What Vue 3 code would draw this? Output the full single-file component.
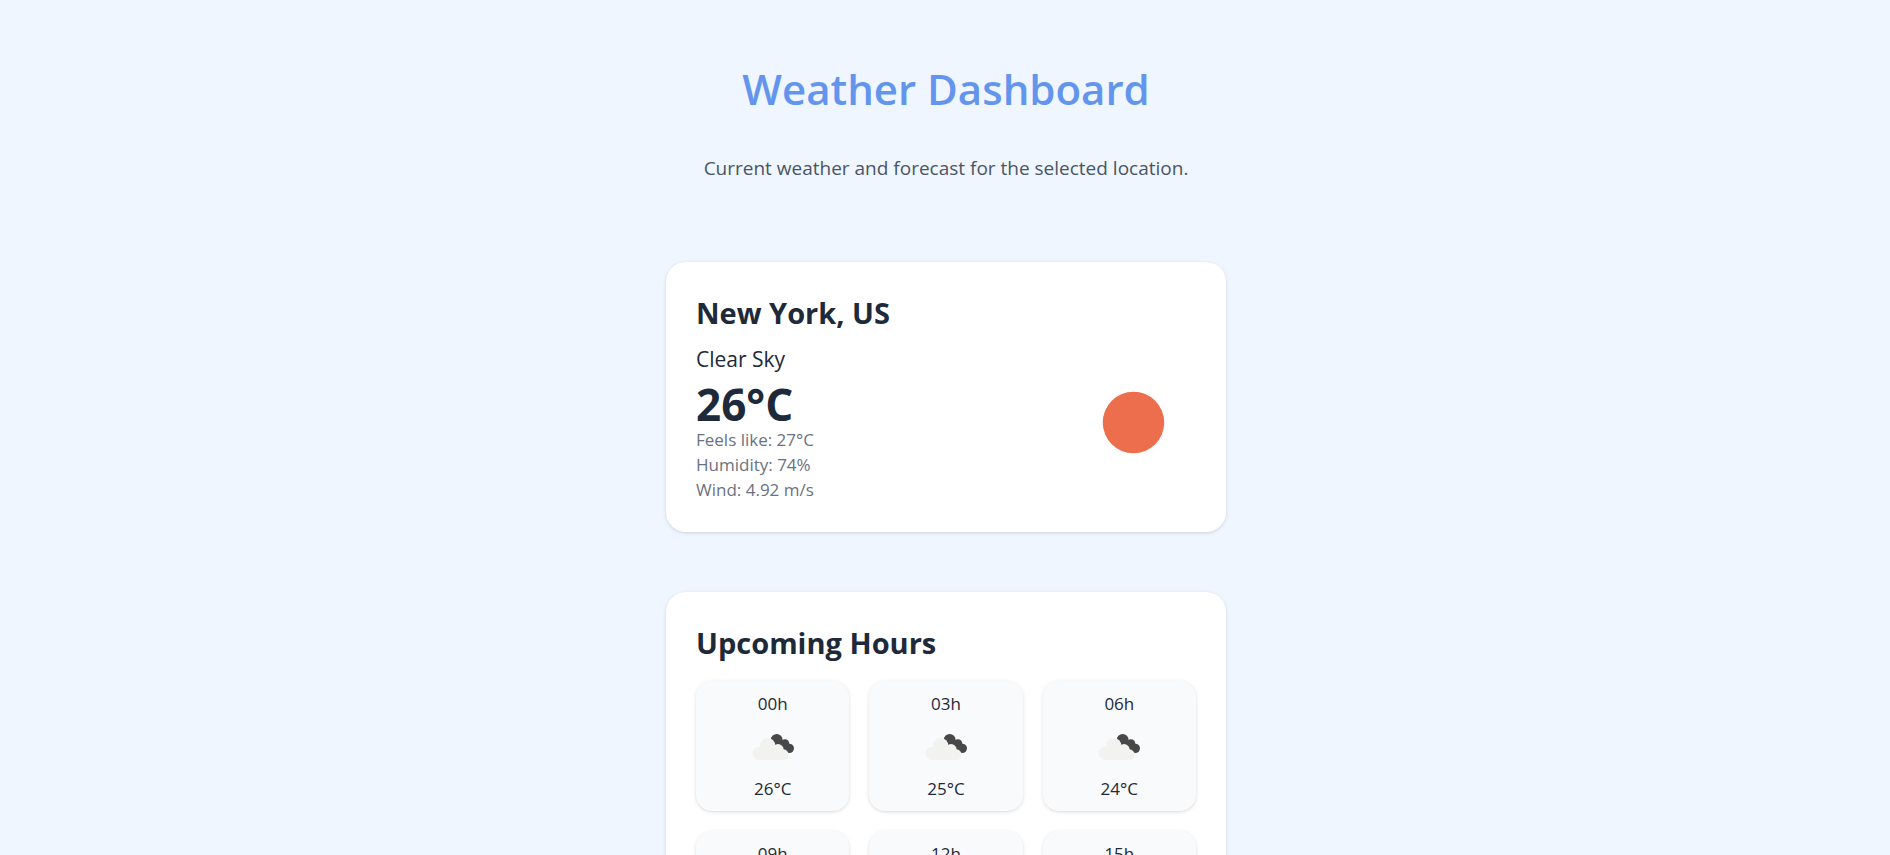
<script setup>
const details = ['Feels like: 27°C', 'Humidity: 74%', 'Wind: 4.92 m/s']

const hours = [
  { time: '00h', temp: '26°C' },
  { time: '03h', temp: '25°C' },
  { time: '06h', temp: '24°C' },
  { time: '09h', temp: '24°C' },
  { time: '12h', temp: '25°C' },
  { time: '15h', temp: '26°C' },
]
</script>

<template>
  <main class="page">
    <header class="intro">
      <h1 class="title">Weather Dashboard</h1>
      <p class="subtitle">Current weather and forecast for the selected location.</p>
    </header>

    <section class="card">
      <h2 class="heading">New York, US</h2>
      <div class="current">
        <div>
          <p class="condition">Clear Sky</p>
          <p class="temperature">26°C</p>
          <p v-for="line in details" :key="line" class="detail">{{ line }}</p>
        </div>
        <svg class="sun" viewBox="0 0 100 100" role="img" aria-label="Clear sky">
          <circle cx="50" cy="50" r="24.6" fill="#ec6e4c" />
        </svg>
      </div>
    </section>

    <section class="card">
      <h2 class="heading">Upcoming Hours</h2>
      <ul class="hours">
        <li v-for="hour in hours" :key="hour.time" class="hour">
          <span>{{ hour.time }}</span>
          <svg class="cloud" viewBox="6 -12 180 180" role="img" aria-label="Broken clouds">
            <g fill="#484848">
              <circle cx="107" cy="60" r="18" />
              <circle cx="132" cy="71" r="13" />
              <circle cx="145" cy="85" r="14" />
              <path d="M107 59 132 62 145 86 136 97 108 78Z" />
            </g>
            <g fill="#f2f2f0">
              <circle cx="80" cy="77" r="23" />
              <circle cx="111" cy="89" r="17" />
              <circle cx="55" cy="100" r="20" />
              <circle cx="127" cy="104" r="16" />
              <path d="M55 90H128V120H55Z" />
            </g>
          </svg>
          <span>{{ hour.temp }}</span>
        </li>
      </ul>
    </section>
  </main>
</template>

<style>
body {
  margin: 0;
  background: #eff6ff;
}
</style>

<style scoped>
.page {
  display: flex;
  flex-direction: column;
  align-items: center;
  gap: 60px;
  padding: 62px 20px 60px 22px;
  font-family: "Open Sans", "Noto Sans", sans-serif;
  color: #1e2939;
}

h1,
h2,
p,
ul {
  margin: 0;
  padding: 0;
}

.intro {
  display: flex;
  flex-direction: column;
  gap: 38px;
  padding-bottom: 20px;
  text-align: center;
}

.title {
  font-size: 42px;
  line-height: 54px;
  font-weight: 600;
  color: #6495ed;
}

.subtitle {
  font-size: 19px;
  line-height: 28px;
  color: #4a5565;
}

.card {
  box-sizing: border-box;
  width: 100%;
  max-width: 560px;
  padding: 30px;
  border-radius: 20px;
  background: #fff;
  box-shadow: 0 1px 4px rgba(0, 0, 0, 0.1), 0 1px 3px -1px rgba(0, 0, 0, 0.1);
}

.heading {
  font-size: 29px;
  line-height: 42px;
  font-weight: 700;
}

.current {
  display: flex;
  align-items: center;
  justify-content: space-between;
  margin-top: 8px;
}

.condition {
  font-size: 21px;
  line-height: 35px;
}

.temperature {
  padding-top: 4px;
  font-size: 44px;
  line-height: 46px;
  font-weight: 700;
}

.detail {
  font-size: 17px;
  line-height: 25px;
  color: #6a7282;
}

.sun {
  width: 125px;
  height: 125px;
}

.hours {
  display: grid;
  grid-template-columns: repeat(3, 1fr);
  gap: 20px;
  margin-top: 17px;
  list-style: none;
}

.hour {
  display: flex;
  flex-direction: column;
  align-items: center;
  padding: 10px;
  border-radius: 16px;
  background: #f9fafb;
  font-size: 17px;
  line-height: 25px;
  box-shadow: 0 1px 4px rgba(0, 0, 0, 0.1), 0 1px 3px -1px rgba(0, 0, 0, 0.1);
}

.cloud {
  width: 60px;
  height: 60px;
}
</style>
